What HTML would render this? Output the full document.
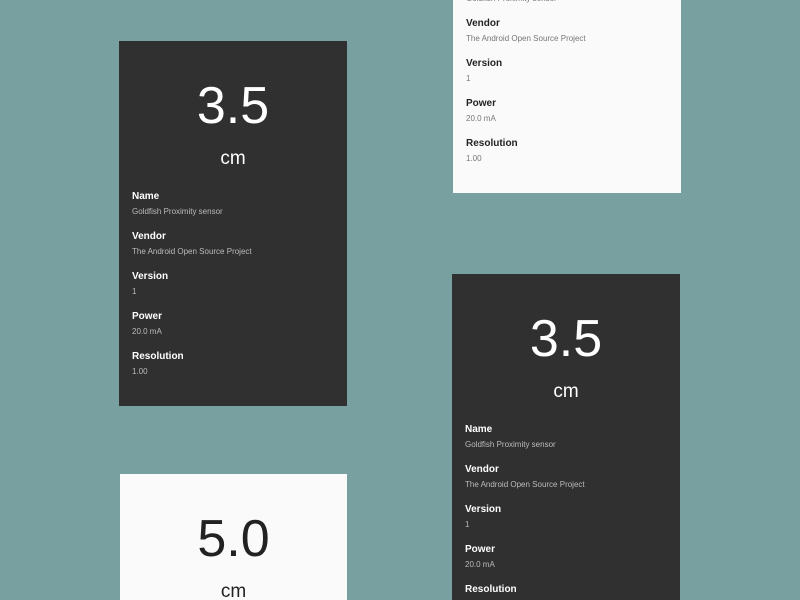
<!DOCTYPE html>
<html><head><style>
html{width:800px;height:600px;overflow:hidden}
body{margin:0;width:800px;height:600px;background:#79a0a0;overflow:hidden;position:relative;font-family:"Liberation Sans","DejaVu Sans",sans-serif}
.c{position:absolute;width:228px;height:365px;overflow:hidden}
.d{background:#303030;color:#fff}
.l{background:#fafafa;color:#222}
.n{position:absolute;left:0;right:0;text-align:center;top:37px;font-size:52px;line-height:56px;font-weight:300}
.u{position:absolute;left:0;right:0;text-align:center;top:106px;font-size:19px;line-height:24px}
.f{position:absolute;left:13px}
.f b{display:block;font-size:10px;line-height:12px;font-weight:bold}
.f span{display:block;font-size:8px;line-height:10px;margin-top:4px;color:#bbb}
.l .f span{color:#777}
.l .f b{color:#222}
</style></head><body>
<div class="c d" style="left:119px;top:41px">
<div class="n">3.5</div><div class="u">cm</div>
<div class="f" style="top:150px"><b>Name</b><span>Goldfish Proximity sensor</span></div>
<div class="f" style="top:190px"><b>Vendor</b><span>The Android Open Source Project</span></div>
<div class="f" style="top:230px"><b>Version</b><span>1</span></div>
<div class="f" style="top:270px"><b>Power</b><span>20.0 mA</span></div>
<div class="f" style="top:310px"><b>Resolution</b><span>1.00</span></div>
</div>
<div class="c l" style="left:453px;top:-172px">
<div class="n">5.0</div><div class="u">cm</div>
<div class="f" style="top:150px"><b>Name</b><span>Goldfish Proximity sensor</span></div>
<div class="f" style="top:190px"><b>Vendor</b><span>The Android Open Source Project</span></div>
<div class="f" style="top:230px"><b>Version</b><span>1</span></div>
<div class="f" style="top:270px"><b>Power</b><span>20.0 mA</span></div>
<div class="f" style="top:310px"><b>Resolution</b><span>1.00</span></div>
</div>
<div class="c d" style="left:452px;top:274px;height:326px">
<div class="n">3.5</div><div class="u">cm</div>
<div class="f" style="top:150px"><b>Name</b><span>Goldfish Proximity sensor</span></div>
<div class="f" style="top:190px"><b>Vendor</b><span>The Android Open Source Project</span></div>
<div class="f" style="top:230px"><b>Version</b><span>1</span></div>
<div class="f" style="top:270px"><b>Power</b><span>20.0 mA</span></div>
<div class="f" style="top:310px"><b>Resolution</b><span>1.00</span></div>
</div>
<div class="c l" style="left:120px;top:474px;width:227px;height:126px">
<div class="n">5.0</div><div class="u">cm</div>
</div>
</body></html>
